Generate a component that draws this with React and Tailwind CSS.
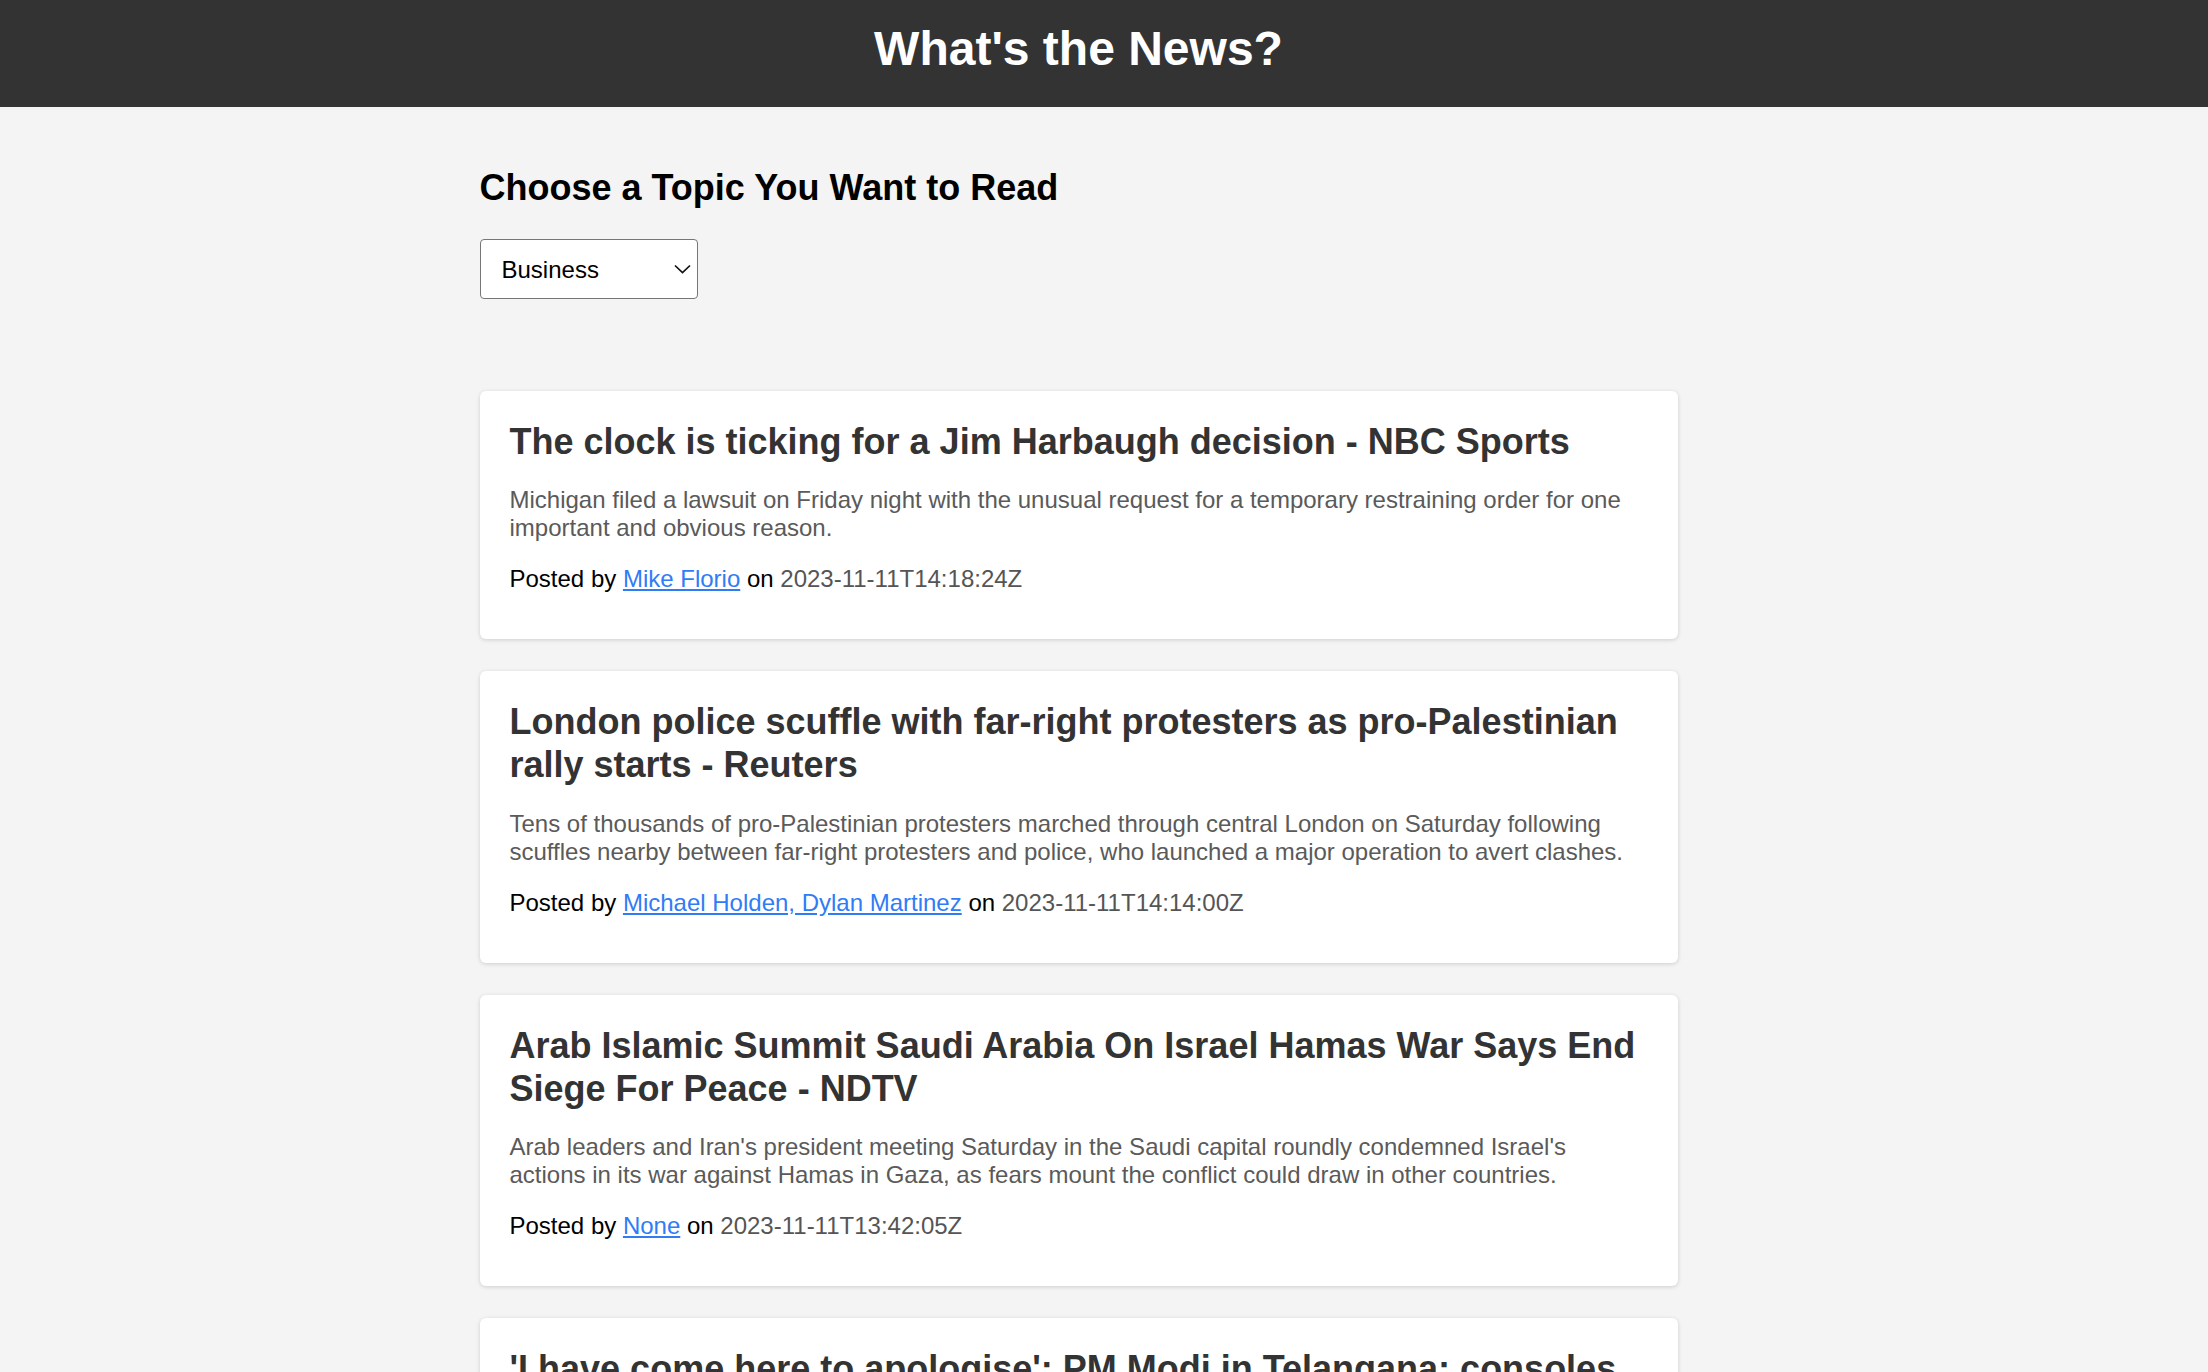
import React, { useState } from "react";

// --- articles shown in the feed ---
const articles = [
  {
    title: "The clock is ticking for a Jim Harbaugh decision - NBC Sports",
    description:
      "Michigan filed a lawsuit on Friday night with the unusual request for a temporary restraining order for one important and obvious reason.",
    author: "Mike Florio",
    publishedAt: "2023-11-11T14:18:24Z",
  },
  {
    title:
      "London police scuffle with far-right protesters as pro-Palestinian rally starts - Reuters",
    description:
      "Tens of thousands of pro-Palestinian protesters marched through central London on Saturday following scuffles nearby between far-right protesters and police, who launched a major operation to avert clashes.",
    author: "Michael Holden, Dylan Martinez",
    publishedAt: "2023-11-11T14:14:00Z",
  },
  {
    title:
      "Arab Islamic Summit Saudi Arabia On Israel Hamas War Says End Siege For Peace - NDTV",
    description:
      "Arab leaders and Iran's president meeting Saturday in the Saudi capital roundly condemned Israel's actions in its war against Hamas in Gaza, as fears mount the conflict could draw in other countries.",
    author: "None",
    publishedAt: "2023-11-11T13:42:05Z",
  },
  {
    title:
      "'I have come here to apologise': PM Modi in Telangana; consoles woman who broke down at rally - Hindustan Times",
    description:
      "PM Modi addressed a rally in Secunderabad on Saturday ahead of the Telangana assembly elections.",
    author: "HT News Desk",
    publishedAt: "2023-11-11T13:30:00Z",
  },
];

const topics = ["Business", "Entertainment", "General", "Health", "Science", "Sports", "Technology"];

// --- single news card ---
const NewsCard = ({ article }) => (
  <div className="bg-white rounded-[6px] shadow-[0_1px_4px_rgba(0,0,0,0.16)] px-[30px] pt-[29px] pb-[28px] mb-[32px]">
    <h2 className="text-[36px] leading-[1.2] font-bold text-[#333] mb-[23px]">
      {article.title}
    </h2>
    <p className="text-[24px] leading-[28px] text-[#5a5a5a] mb-[23px]">
      {article.description}
    </p>
    <p className="text-[24px] leading-[28px] text-black mb-[18px]">
      Posted by{" "}
      <a href="#" className="text-[#2f7cf6] underline">
        {article.author}
      </a>{" "}
      on <span className="text-[#555]">{article.publishedAt}</span>
    </p>
  </div>
);

export default function App() {
  const [topic, setTopic] = useState("Business");

  return (
    <div className="min-h-screen bg-[#f4f4f4] font-['Liberation_Sans',Arial,sans-serif]">
      {/* header */}
      <header className="h-[107px] bg-[#333] pr-[51px] pt-[20px]">
        <h1 className="text-center text-white font-bold text-[48px] leading-[1.2]">
          What's the News?
        </h1>
      </header>

      <div className="pr-[51px]">
        <main className="w-[1198px] mx-auto pt-[60px]">
          <h2 className="text-[36px] leading-[42px] font-bold text-black">
            Choose a Topic You Want to Read
          </h2>

          <div className="relative w-[218px] h-[60px] mt-[30px]">
            <select
              value={topic}
              onChange={(e) => setTopic(e.target.value)}
              className="appearance-none w-full h-full bg-white border border-[#767676] rounded-[4px] pl-[21px] pt-[2px] text-[24px] text-black outline-none"
            >
              {topics.map((t) => (
                <option key={t} value={t}>
                  {t}
                </option>
              ))}
            </select>
            <svg
              className="pointer-events-none absolute left-[194px] top-[25px]"
              width="17"
              height="10"
              viewBox="0 0 17 10"
              fill="none"
            >
              <path d="M1 1.5 L8.5 8.5 L16 1.5" stroke="#111" strokeWidth="1.7" />
            </svg>
          </div>

          <div className="mt-[92px]">
            {articles.map((a) => (
              <NewsCard key={a.title} article={a} />
            ))}
          </div>
        </main>
      </div>
    </div>
  );
}
